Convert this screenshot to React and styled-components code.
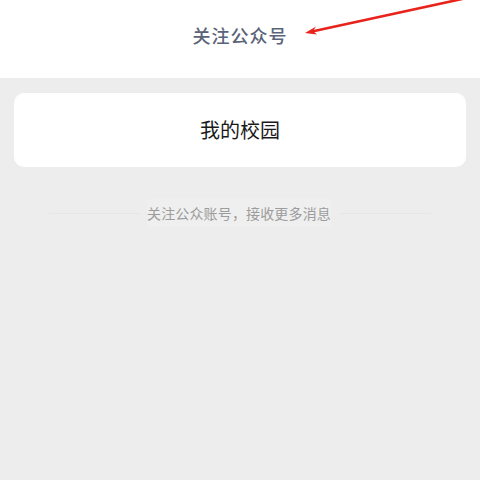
import React from "react";
import styled, { createGlobalStyle } from "styled-components";

const Global = createGlobalStyle`
  html, body { margin: 0; padding: 0; background: #ededed; }
  body { font-family: "Noto Sans CJK SC", "Noto Sans", sans-serif; }
`;

const Page = styled.div`
  width: 480px;
  height: 480px;
  background: #ededed;
  position: relative;
  overflow: hidden;
  display: flex;
  flex-direction: column;
`;

const Header = styled.header`
  height: 78px;
  background: #ffffff;
  display: flex;
  align-items: flex-start;
  justify-content: center;
  padding-top: 22px;
  box-sizing: border-box;
`;

const Title = styled.h1`
  margin: 0;
  font-size: 18px;
  font-weight: 500;
  color: #5a6378;
  letter-spacing: 1px;
  line-height: 26px;
`;

const Body = styled.main`
  padding: 15px 14px 0;
  display: flex;
  flex-direction: column;
`;

const Card = styled.div`
  height: 74px;
  background: #ffffff;
  border-radius: 10px;
  display: flex;
  align-items: center;
  justify-content: center;
  font-size: 20px;
  color: #1a1a1a;
  font-weight: 400;
  padding-bottom: 2px;
  box-sizing: border-box;
`;

const Note = styled.div`
  margin-top: 32px;
  display: flex;
  align-items: center;
  justify-content: center;
  gap: 8px;
`;

const Line = styled.span`
  width: 92px;
  height: 1px;
  background: #e6e6e6;
`;

const NoteText = styled.span`
  font-size: 14px;
  color: #9c9c9c;
  line-height: 20px;
  background: #efefef;
  padding: 4px 0;
  letter-spacing: 0.15px;
  margin-left: -2px;
`;

const Arrow = styled.svg`
  position: absolute;
  left: 0;
  top: 0;
  pointer-events: none;
`;

export default function App() {
  return (
    <>
      <Global />
      <Page>
        <Header>
          <Title>关注公众号</Title>
        </Header>
        <Body>
          <Card>我的校园</Card>
          <Note>
            <Line />
            <NoteText>关注公众账号，接收更多消息</NoteText>
            <Line />
          </Note>
        </Body>
        <Arrow width="480" height="80" viewBox="0 0 480 80">
          <line x1="485" y1="-6" x2="312" y2="31.5" stroke="#e8231c" strokeWidth="2.6" strokeLinecap="round" />
          <path d="M305 33 L316 26.5 L313 31 L317 34.5 Z" fill="#e8231c" />
        </Arrow>
      </Page>
    </>
  );
}
